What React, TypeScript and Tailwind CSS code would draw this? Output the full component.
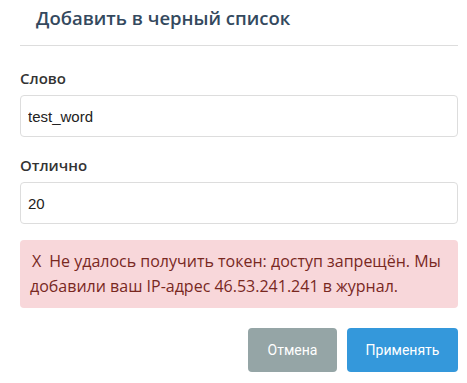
export default function App() {
  const font = { fontFamily: '"Open Sans", "Noto Sans", sans-serif' };
  return (
    <div className="w-[467px] h-[383px] bg-white overflow-hidden" style={font}>
      <div className="pl-[20px] pr-[9px]">
        <div className="h-[46px] border-b border-[#dddddd] pl-[16px] pt-[3px]">
          <h2 className="text-[18.5px] leading-[30px] font-semibold text-[#34495e]">Добавить в черный список</h2>
        </div>
        <div className="pt-[21px]">
          <label className="block text-[15px] leading-[22px] font-semibold text-[#333333]">Слово</label>
          <input
            readOnly
            value="test_word"
            className="mt-[6px] block w-full h-[42px] border border-[#dddddd] rounded-[4px] px-[7px] text-[15px] text-[#222] outline-none"
            style={{ fontFamily: '"Liberation Sans", Arial, sans-serif' }}
          />
          <label className="block mt-[17px] text-[15px] leading-[22px] font-semibold text-[#333333]">Отлично</label>
          <input
            readOnly
            value="20"
            className="mt-[6px] block w-full h-[42px] border border-[#dddddd] rounded-[4px] px-[7px] text-[15px] text-[#222] outline-none"
            style={{ fontFamily: '"Liberation Sans", Arial, sans-serif' }}
          />
          <div className="mt-[16px] h-[68px] bg-[#f8d7da] rounded-[4px] px-[10px] py-[9px] text-[16px] leading-[25px] text-[#78281f] indent-[2px]">
            {"Х\u2002Не удалось получить токен: доступ запрещён. Мы добавили ваш IP-адрес 46.53.241.241 в журнал."}
          </div>
          <div className="mt-[20px] flex justify-end gap-[10px]" style={{ fontFamily: 'Roboto, sans-serif' }}>
            <button className="w-[89px] h-[44px] rounded-[4px] bg-[#95a5a6] text-white text-[14px]">Отмена</button>
            <button className="w-[111px] h-[44px] rounded-[4px] bg-[#3498db] text-white text-[14px]">Применять</button>
          </div>
        </div>
      </div>
    </div>
  );
}
